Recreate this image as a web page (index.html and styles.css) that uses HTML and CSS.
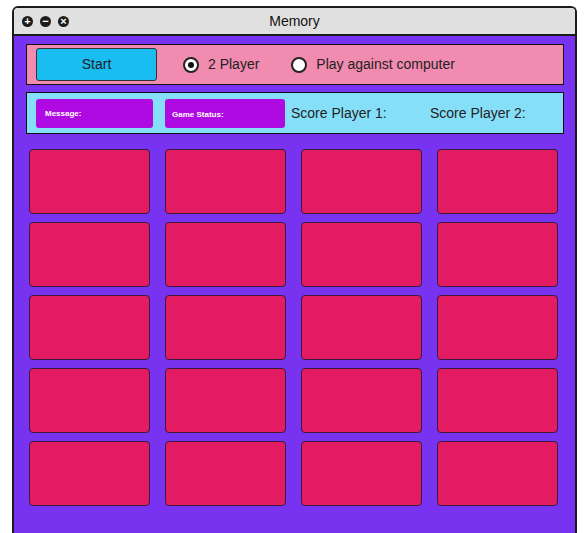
FILE: index.html
```html
<!DOCTYPE html>
<html lang="en">
<head>
    <meta charset="UTF-8">
    <title>Memory</title>
    <link rel="stylesheet" href="styles.css">
</head>
<body>
    <div class="window">
        <div class="titlebar">
            <div class="controls">
                <span class="ctl">+</span>
                <span class="ctl">&minus;</span>
                <span class="ctl">&times;</span>
            </div>
            <div class="title">Memory</div>
        </div>

        <div class="content">
            <div class="toolbar">
                <button class="start">Start</button>
                <label class="radio"><span class="dot checked"></span>2 Player</label>
                <label class="radio"><span class="dot"></span>Play against computer</label>
            </div>

            <div class="status">
                <div class="info">Message:</div>
                <div class="info">Game Status:</div>
                <span class="score first">Score Player 1:</span>
                <span class="score">Score Player 2:</span>
            </div>

            <div class="board">
                <div class="card"></div>
                <div class="card"></div>
                <div class="card"></div>
                <div class="card"></div>
                <div class="card"></div>
                <div class="card"></div>
                <div class="card"></div>
                <div class="card"></div>
                <div class="card"></div>
                <div class="card"></div>
                <div class="card"></div>
                <div class="card"></div>
                <div class="card"></div>
                <div class="card"></div>
                <div class="card"></div>
                <div class="card"></div>
                <div class="card"></div>
                <div class="card"></div>
                <div class="card"></div>
                <div class="card"></div>
            </div>
        </div>
    </div>
</body>
</html>
```

FILE: styles.css
```css
body {
    margin: 0;
    font-family: "Liberation Sans", Arial, sans-serif;
    background: #fff;
    color: #222;
}
.window {
    margin: 6px 0 0 12px;
    width: 561px;
    border: 2px solid #1c1c1c;
    border-bottom: none;
    border-radius: 6px 6px 0 0;
    overflow: hidden;
}
.titlebar {
    position: relative;
    height: 26px;
    background: #e0e0e0;
    border-bottom: 2px solid #1c1c1c;
    display: flex;
    align-items: center;
}
.controls {
    display: flex;
    gap: 7px;
    padding-left: 8px;
}
.ctl {
    width: 11px;
    height: 11px;
    border-radius: 50%;
    background: #1c1c1c;
    color: #fff;
    font-size: 11px;
    font-weight: bold;
    line-height: 11px;
    text-align: center;
}
.title {
    position: absolute;
    left: 0;
    right: 0;
    text-align: center;
    font-size: 14px;
    color: #111;
}
.content {
    background: #7733ef;
    padding: 8px 11px 40px 12px;
    height: 500px;
}
.toolbar {
    height: 39px;
    border: 1px solid #111;
    background: #f28bb0;
    display: flex;
    align-items: center;
    padding-left: 9px;
}
.start {
    width: 121px;
    height: 33px;
    background: #19bdf2;
    border: 1px solid #333;
    border-radius: 3px;
    font-family: inherit;
    font-size: 14px;
    color: #222;
    margin-right: 26px;
    padding: 0 0 2px;
    flex-shrink: 0;
}
.radio {
    display: flex;
    align-items: center;
    font-size: 14px;
    margin-right: 32px;
    padding-bottom: 2px;
}
.dot {
    width: 12px;
    height: 12px;
    border: 2px solid #222;
    border-radius: 50%;
    background: #fff;
    margin-right: 9px;
    position: relative;
    margin-top: 3px;
}
.dot.checked::after {
    content: "";
    position: absolute;
    left: 3px;
    top: 3px;
    width: 6px;
    height: 6px;
    border-radius: 50%;
    background: #111;
}
.status {
    margin-top: 7px;
    height: 40px;
    border: 1px solid #111;
    background: #86dff9;
    display: flex;
    align-items: center;
    padding-left: 9px;
}
.info {
    flex-shrink: 0;
    width: 117px;
    height: 29px;
    background: #b00ae2;
    border-radius: 3px;
    color: #fff;
    font-size: 8px;
    font-weight: bold;
    display: flex;
    align-items: center;
    padding-left: 9px;
    box-sizing: border-box;
    margin-right: 12px;
}
.info + .info {
    width: 120px;
    padding-top: 2px;
    padding-left: 7px;
    margin-right: 6px;
}
.score {
    font-size: 14px;
    white-space: nowrap;
}
.score.first {
    width: 139px;
    flex-shrink: 0;
}
.board {
    margin: 15px 0 0 3px;
    display: grid;
    grid-template-columns: repeat(4, 121px);
    grid-auto-rows: 65px;
    column-gap: 15px;
    row-gap: 8px;
}
.card {
    background: #e21b63;
    border: 1px solid #3b1a3a;
    border-radius: 4px;
}
```
